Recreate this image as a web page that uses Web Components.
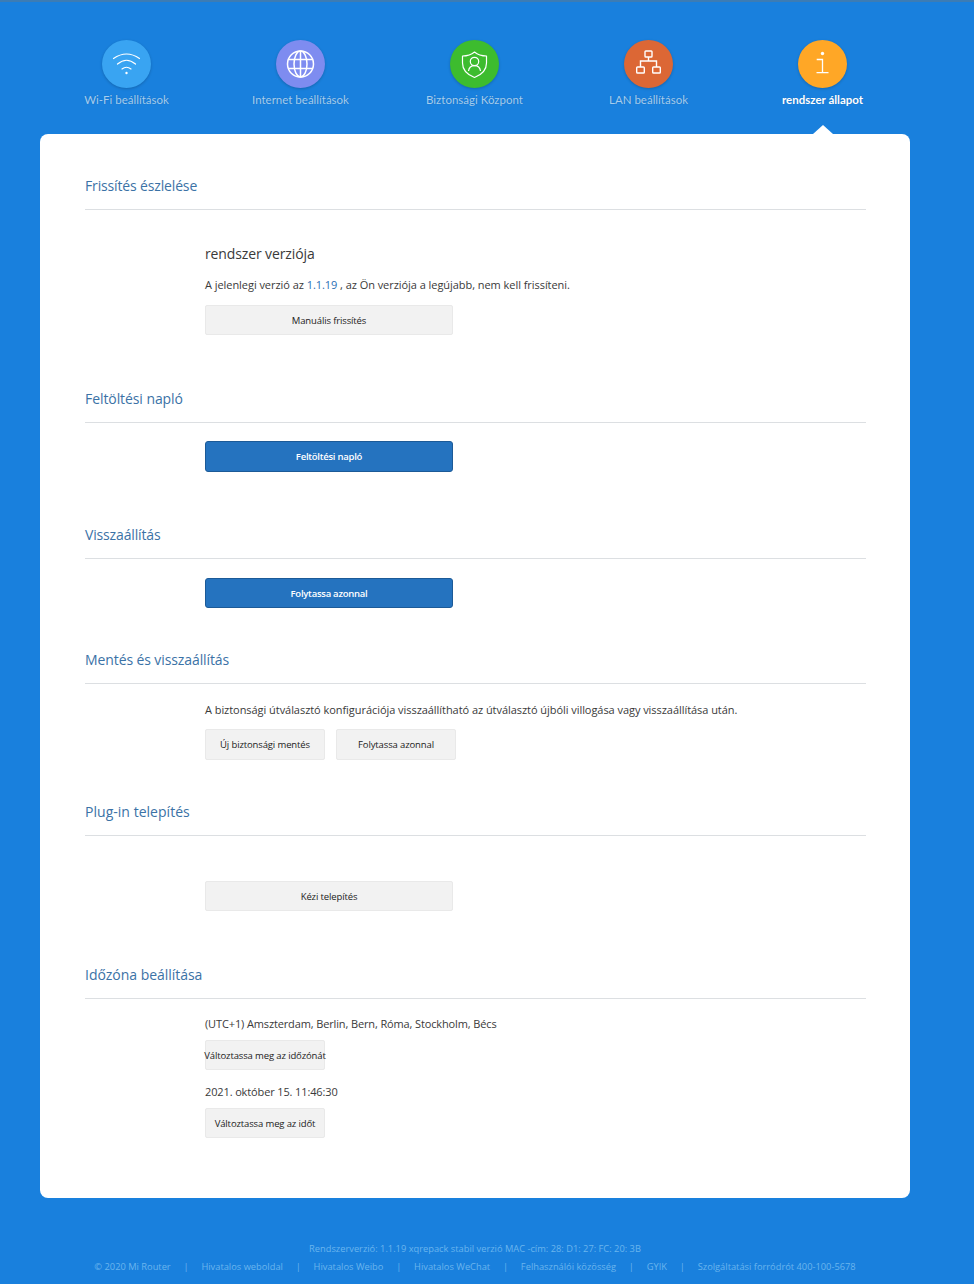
<!DOCTYPE html>
<html lang="hu"><head><meta charset="utf-8"><title>Mi Router</title>
<style>
html,body{margin:0;padding:0;background:#1980dd}
body{font-family:"Open Sans","Noto Sans",sans-serif;color:#333}
</style></head><body>
<app-page>
  <top-nav slot="nav">
    <nav-item label="Wi-Fi beállítások" color="#39a4f2"><svg viewBox="0 0 49 49" fill="none" stroke="#fff" stroke-width="1.2" stroke-linecap="round"><path d="M11.5 18.5Q24.5 9.5 37.5 18.5"/><path d="M15.5 24Q24.5 16.5 33.5 24"/><path d="M20 29Q24.5 25.5 29 29"/><circle cx="24.5" cy="33" r="1.2" fill="#fff" stroke="none"/></svg></nav-item>
    <nav-item label="Internet beállítások" color="#7e8cf0"><svg viewBox="0 0 49 49" fill="none" stroke="#fff" stroke-width="1.5"><circle cx="24.5" cy="24" r="13"/><ellipse cx="24.5" cy="24" rx="6.5" ry="13"/><path d="M24.5 11V37M13 19.5H36M13 28.5H36"/></svg></nav-item>
    <nav-item label="Biztonsági Központ" color="#3dbc2e"><svg viewBox="0 0 49 49" fill="none" stroke="#fff" stroke-width="1.2" stroke-linejoin="round"><path d="M24.5 12C21 15 17 16 12.5 16V23C12.5 30 18 35 24.5 37.5C31 35 36.5 30 36.5 23V16C32 16 28 15 24.5 12Z"/><circle cx="24.5" cy="21.5" r="4.2"/><path d="M18.5 31C19 27.5 21 25.7 24.5 25.7S30 27.5 30.5 31"/></svg></nav-item>
    <nav-item label="LAN beállítások" color="#dc6735"><svg viewBox="0 0 49 49" fill="none" stroke="#fff" stroke-width="1.4"><rect x="21" y="11" width="7" height="6" rx=".8"/><rect x="12.7" y="27" width="7.6" height="6" rx=".8"/><rect x="28.7" y="27" width="7.6" height="6" rx=".8"/><path d="M24.5 17V21M16.5 27V21H32.5V27"/></svg></nav-item>
    <nav-item label="rendszer állapot" color="#ffa726" active><svg viewBox="0 0 49 49" fill="none" stroke="#fff" stroke-width="1.3"><circle cx="24.5" cy="13.5" r="1.7" fill="#fff" stroke="none"/><path d="M18.7 19.5H24.5V32.7M18.5 32.7H30.5"/></svg></nav-item>
  </top-nav>
  <main-card slot="card">
    <set-section title="Frissítés észlelése" style="--gap:0px;--pad:32px">
      <sub-title>rendszer verziója</sub-title>
      <info-line style="--mt:9px">A jelenlegi verzió az <a-link>1.1.19</a-link> , az Ön verziója a legújabb, nem kell frissíteni.</info-line>
      <btn-row style="--mt:10px"><ui-btn wide>Manuális frissítés</ui-btn></btn-row>
    </set-section>
    <set-section title="Feltöltési napló" style="--gap:40px;--pad:18px;--ls:-.08px">
      <btn-row><ui-btn wide primary tall>Feltöltési napló</ui-btn></btn-row>
    </set-section>
    <set-section title="Visszaállítás" style="--gap:39px;--pad:19px">
      <btn-row><ui-btn wide primary>Folytassa azonnal</ui-btn></btn-row>
    </set-section>
    <set-section title="Mentés és visszaállítás" style="--gap:28px;--pad:16px;--ls:-.1px">
      <info-line>A biztonsági útválasztó konfigurációja visszaállítható az útválasztó újbóli villogása vagy visszaállítása után.</info-line>
      <btn-row style="--mt:9px"><ui-btn tall>Új biztonsági mentés</ui-btn><ui-btn tall>Folytassa azonnal</ui-btn></btn-row>
    </set-section>
    <set-section title="Plug-in telepítés" style="--gap:28px;--pad:45px;--ls:.03px">
      <btn-row><ui-btn wide>Kézi telepítés</ui-btn></btn-row>
    </set-section>
    <set-section title="Időzóna beállítása" style="--gap:40px;--pad:15px;--ls:-.03px">
      <info-line style="--ls:-.13px">(UTC+1) Amszterdam, Berlin, Bern, Róma, Stockholm, Bécs</info-line>
      <btn-row style="--mt:6px"><ui-btn>Változtassa meg az időzónát</ui-btn></btn-row>
      <info-line style="--mt:12px;--ls:-.13px">2021. október 15. 11:46:30</info-line>
      <btn-row style="--mt:6px"><ui-btn>Változtassa meg az időt</ui-btn></btn-row>
    </set-section>
  </main-card>
  <page-footer slot="footer"></page-footer>
</app-page>
<script>
function def(name, css, html){
  customElements.define(name, class extends HTMLElement{
    constructor(){super();this.attachShadow({mode:'open'});}
    connectedCallback(){
      this.shadowRoot.innerHTML='<style>'+css+'</style>'+(typeof html==='function'?html(this):html);
    }
  });
}
def('app-page',':host{display:block;width:974px;height:1284px;overflow:hidden;box-sizing:border-box;position:relative}.bar{height:2px;background:#3c7cb4}.wrap{padding:0 64px 0 40px}',
 '<div class="bar"></div><div class="wrap"><slot name="nav"></slot><slot name="card"></slot></div><slot name="footer"></slot>');
def('top-nav',':host{display:flex;padding-top:38px;height:94px;margin-left:-.5px}','<slot></slot>');
def('nav-item',':host{flex:0 0 174px;display:flex;flex-direction:column;align-items:center;position:relative;font-family:Lato,"Open Sans",sans-serif;font-size:11.5px;color:#a4cdf0}:host([active]){color:#fff;font-weight:700}:host([active])::after{content:"";position:absolute;left:77px;top:85px;border:10px solid transparent;border-top:0;border-bottom:9px solid #fff;}.c{width:49px;height:48px;border-radius:50%;box-shadow:0 1px 3px rgba(0,0,0,.2);display:block}::slotted(svg){width:49px;height:49px;display:block}.l{margin-top:4px;line-height:16px;white-space:nowrap;text-shadow:0 0 1px rgba(20,60,110,.35)}',
 el=>'<div class="c" style="background:'+el.getAttribute('color')+'"><slot></slot></div><div class="l">'+el.getAttribute('label')+'</div>');
def('main-card',':host{display:block;background:#fff;border-radius:8px;padding:28px 44px 60px 45px;height:1064px;box-sizing:border-box}','<slot></slot>');
def('set-section',':host{display:block;margin-top:var(--gap,0)}.h{height:47px;line-height:47px;border-bottom:1px solid #dcdfe2;font-size:14px;letter-spacing:var(--ls,-.15px);color:#3b72a6}.b{padding:var(--pad,0) 0 0 120px;--ls:initial}',
 el=>'<div class="h">'+el.getAttribute('title')+'</div><div class="b"><slot></slot></div>');
def('sub-title',':host{display:block;font-size:14px;letter-spacing:-.12px;line-height:24px;color:#3a3a3a}','<slot></slot>');
def('info-line',':host{display:block;font-size:11px;letter-spacing:var(--ls,-.05px);line-height:20px;color:#3a3a3a;margin-top:var(--mt,0);white-space:nowrap}','<slot></slot>');
def('a-link',':host{color:#2a6fb5}','<slot></slot>');
def('btn-row',':host{display:flex;gap:11px;margin-top:var(--mt,0)}','<slot></slot>');
def('ui-btn',':host{display:flex;align-items:center;justify-content:center;width:120px;height:30px;box-sizing:border-box;background:#f2f2f2;border:1px solid #e9e9e9;border-radius:2px;font-size:9.5px;letter-spacing:-.13px;color:#222;white-space:nowrap}:host([wide]){width:248px}:host([tall]){height:31px}:host([primary]){background:#2573bf;border-color:#1c5a97;border-radius:3px;color:#fff;font-weight:600;letter-spacing:-.25px}','<slot></slot>');
def('page-footer',':host{display:block;position:absolute;left:40px;width:870px;top:1240px;text-align:center;font-size:9.3px;line-height:18px;color:#6ab5ee}.r{display:flex;justify-content:center;gap:12.8px;white-space:nowrap}',
 '<div>Rendszerverzió: 1.1.19 xqrepack stabil verzió MAC -cím: 28: D1: 27: FC: 20: 3B</div><div class="r"><span>© 2020 Mi Router</span><span>|</span><span>Hivatalos weboldal</span><span>|</span><span>Hivatalos Weibo</span><span>|</span><span>Hivatalos WeChat</span><span>|</span><span>Felhasználói közösség</span><span>|</span><span>GYIK</span><span>|</span><span>Szolgáltatási forródrót 400-100-5678</span></div>');
</script>
</body></html>
